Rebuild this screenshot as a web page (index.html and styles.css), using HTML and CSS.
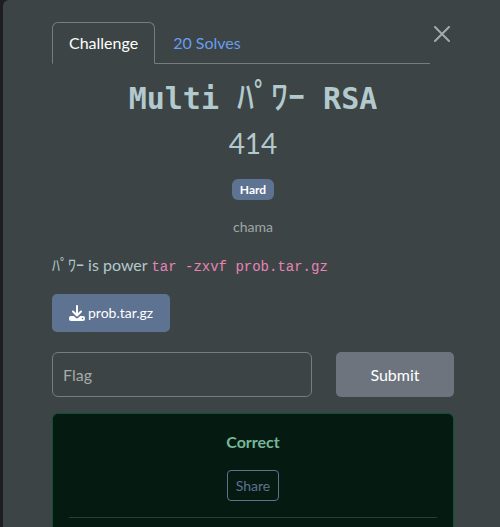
FILE: index.html
```html
<!DOCTYPE html>
<html lang="en">
<head>
<meta charset="utf-8">
<meta name="viewport" content="width=device-width, initial-scale=1">
<title>Multi ﾊﾟﾜｰ RSA</title>
<link rel="stylesheet" href="styles.css">
</head>
<body>
<main class="modal">
  <header class="modal-head">
    <nav class="tabs">
      <a class="tab active" href="#challenge">Challenge</a>
      <a class="tab" href="#solves">20 Solves</a>
    </nav>
    <button class="close" type="button" aria-label="Close">
      <svg viewBox="0 0 16 16" width="16" height="16"><path d="M1 1 15 15M15 1 1 15" fill="none" stroke="currentColor" stroke-width="2" stroke-linecap="round"/></svg>
    </button>
  </header>
  <section id="challenge" class="challenge">
    <h1 class="title">Multi <span class="kana">ﾊﾟﾜｰ</span> RSA</h1>
    <p class="points">414</p>
    <span class="badge">Hard</span>
    <p class="author">chama</p>
    <p class="description">ﾊﾟﾜｰ is power <code>tar -zxvf prob.tar.gz</code></p>
    <a class="download" href="#prob.tar.gz">
      <svg viewBox="0 0 16 16" width="16" height="16"><path d="M8 1v9M4 6.500l4 4 4-4" fill="none" stroke="currentColor" stroke-width="2" stroke-linecap="round" stroke-linejoin="round"/><path d="M2 11h2.800L7 13.100q1 .8 2 0L11.200 11H14q2 0 2 2v1q0 2-2 2H2q-2 0-2-2v-1q0-2 2-2z" fill="currentColor"/><circle cx="13.500" cy="13.500" r=".8" fill="#5e7292"/></svg>
      <span>prob.tar.gz</span>
    </a>
    <form class="flag-form">
      <input class="flag" type="text" aria-label="Flag" placeholder="Flag">
      <button class="submit" type="button">Submit</button>
    </form>
    <div class="alert" role="alert">
      <strong>Correct</strong>
      <button class="share" type="button">Share</button>
      <hr>
    </div>
  </section>
</main>
</body>
</html>
```
FILE: styles.css
```css
* {
  box-sizing: border-box;
}

body {
  margin: 0;
  background: #1c1e20;
  color: #b2c9cd;
  font: 16px/24px Lato, "Noto Sans CJK JP", sans-serif;
}

.modal {
  display: flex;
  flex-direction: column;
  min-height: 100vh;
  margin-left: 3px;
  padding: 22px 46px 0 49px;
  background: #3d4445;
  border-top-left-radius: 6px;
}

.modal-head {
  display: flex;
  align-items: flex-start;
}

.tabs {
  display: flex;
  flex: 1;
  gap: 1px;
  border-bottom: 1px solid #757d7e;
}

.tab {
  margin-bottom: -1px;
  padding: 8px 16px;
  border: 1px solid transparent;
  border-radius: 6px 6px 0 0;
  color: #689cf0;
  text-decoration: none;
}

.tab.active {
  border-color: #757d7e;
  border-bottom-color: #3d4445;
  background: #3d4445;
  color: #fff;
}

.close {
  display: flex;
  padding: 4px;
  border: 0;
  background: none;
  color: #a5a9aa;
}

.challenge {
  display: flex;
  flex: 1;
  flex-direction: column;
}

p,
.title {
  margin: 0;
}

.title {
  margin-top: 14px;
  font: bold 30px/40px "DejaVu Sans Mono", monospace;
  text-align: center;
  white-space: nowrap;
}

.kana {
  font-family: "Noto Sans CJK JP", sans-serif;
  font-size: 34px;
  font-weight: 500;
  line-height: 1;
}

.points {
  margin-top: 8px;
  font-size: 28px;
  line-height: 32px;
  text-align: center;
}

.badge {
  align-self: center;
  margin-top: 20px;
  padding: 4px 8px;
  border-radius: 6px;
  background: #5e7292;
  color: #fff;
  font-size: 12px;
  font-weight: 700;
  line-height: 13px;
}

.author {
  margin-top: 15px;
  color: #a0a6a7;
  font-size: 14px;
  text-align: center;
}

.description {
  margin-top: 14px;
}

code {
  color: #e685b5;
  font: 14px "Liberation Mono", monospace;
}

.download {
  display: flex;
  align-self: flex-start;
  align-items: center;
  gap: 3px;
  margin-top: 17px;
  padding: 7px 17px;
  border-radius: 5px;
  background: #5e7292;
  color: #fff;
  font-size: 14px;
  text-decoration: none;
}

.flag-form {
  display: flex;
  gap: 24px;
  margin: 20px 0 0;
}

.flag {
  flex: 1;
  min-width: 0;
  height: 45px;
  padding: 0 10px;
  border: 1px solid #757d7e;
  border-radius: 6px;
  background: transparent;
  color: #adc5c9;
  font: inherit;
}

.flag::placeholder {
  color: #a5aaab;
  opacity: 1;
}

.submit {
  width: 118px;
  border: 0;
  border-radius: 5px;
  background: #6d747e;
  color: #fff;
  font: inherit;
}

.alert {
  display: flex;
  flex: 1;
  flex-direction: column;
  align-items: center;
  margin-top: 16px;
  padding: 16px 16px 0;
  border: 1px solid #0f5132;
  border-bottom: 0;
  border-radius: 6px 6px 0 0;
  background: #051b11;
  color: #75b798;
}

.share {
  margin-top: 16px;
  padding: 4px 8px;
  border: 1px solid #5e7292;
  border-radius: 4px;
  background: transparent;
  color: #5e7292;
  font: 14px/21px Lato, sans-serif;
}

hr {
  width: 100%;
  margin: 16px 0 0;
  border: 0;
  border-top: 1px solid #21422f;
}
```
